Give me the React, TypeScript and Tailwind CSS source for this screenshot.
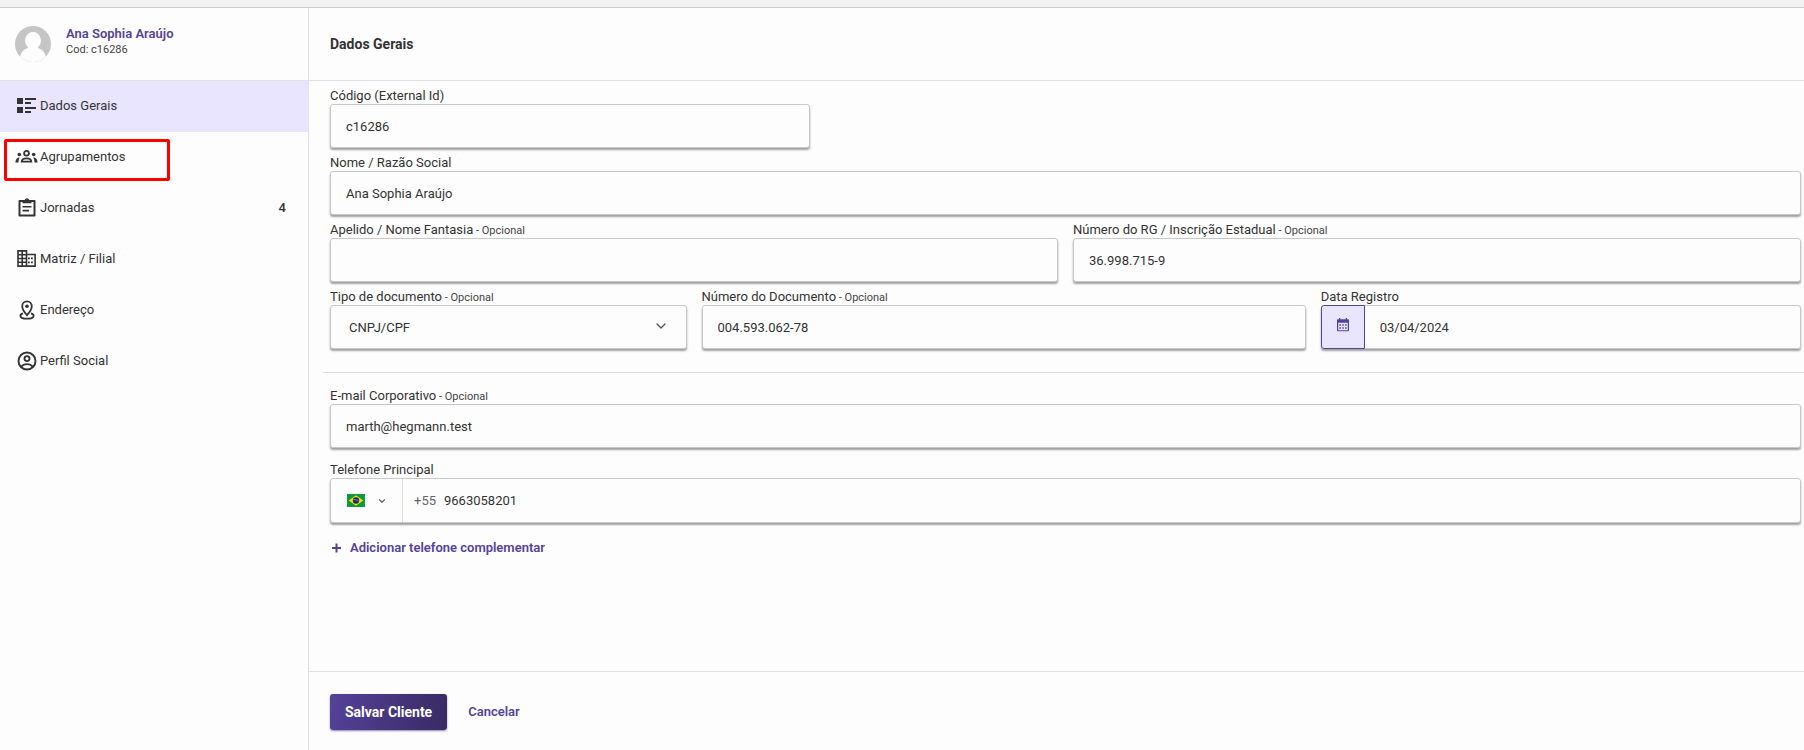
import { useState } from 'react'
import type { ReactNode } from 'react'
import { ChevronDown } from 'lucide-react'

interface NavItem {
  label: string
  icon: ReactNode
  count?: number
  highlighted?: boolean
}

interface FieldProps {
  id: string
  label: string
  optional?: boolean
  className?: string
  children: ReactNode
}

const controlClass =
  'block h-11 w-full rounded-[3px] border border-[#c8c8c8] bg-[#fdfdfd] px-[15px] text-[13px] text-[#333] shadow-[0_2px_2px_#a0a0a0] outline-none focus:border-[#54429a]'

function ListIcon() {
  return (
    <svg viewBox="0 0 19 15" className="h-[15px] w-[19px]" fill="currentColor" aria-hidden="true">
      <path d="M0 0h6v6H0zM0 9h6v6H0zM8 0h11v2H8zM8 4h6v2H8zM8 9h11v2H8zM8 13h6v2H8z" />
    </svg>
  )
}

function GroupIcon() {
  return (
    <svg viewBox="0 0 23 13" className="h-[13px] w-[23px]" fill="none" stroke="currentColor" aria-hidden="true">
      <circle cx="11.500" cy="3.300" r="2.400" strokeWidth="1.800" />
      <path d="M6.700 11.600c.2-2.100 2-3.200 4.800-3.200s4.600 1.100 4.800 3.200z" strokeWidth="1.800" />
      <g fill="currentColor" stroke="none">
        <circle cx="4.300" cy="4.500" r="1.800" />
        <circle cx="18.700" cy="4.500" r="1.800" />
        <path d="M4.800 7.600C2.200 7.500.6 9.200.4 12.500h3.100c0-2.200.4-3.600 1.300-4.900zM18.200 7.600c2.600-.1 4.200 1.600 4.400 4.900h-3.100c0-2.200-.4-3.600-1.300-4.900z" />
      </g>
    </svg>
  )
}

function ClipboardIcon() {
  return (
    <svg viewBox="0 0 18 19" className="h-[19px] w-[18px]" aria-hidden="true">
      <path fill="none" stroke="currentColor" strokeWidth="2" strokeLinejoin="round" d="M1.500 3h15v14.500h-15z" />
      <path fill="currentColor" fillRule="evenodd" d="M4.500 2h2.200a2.400 2.400 0 0 1 4.600 0h2.200v3.200h-9zM9 1.800a.8.8 0 1 0 0 1.600.8.800 0 0 0 0-1.600z" />
      <path fill="none" stroke="currentColor" strokeWidth="1.600" d="M4.500 8.800h9M4.500 12.600h6.500" />
    </svg>
  )
}

function BuildingIcon() {
  return (
    <svg viewBox="0 0 19 17" className="h-[17px] w-[19px]" fill="none" stroke="currentColor" strokeWidth="1.600" aria-hidden="true">
      <path d="M1 .9h8.500v15.200H1zM9.500 4.500h8.600v11.600H9.500M5.200 1v15M1 4.700h8.500M1 8.500h8.500M1 12.300h8.500" />
      <path fill="currentColor" stroke="none" d="M11 7.500h1.800v1.800H11zM14 7.500h1.800v1.800H14zM11 11.500h1.800v1.800H11zM14 11.500h1.800v1.800H14z" />
    </svg>
  )
}

function PinIcon() {
  return (
    <svg viewBox="0 0 20 20" className="h-5 w-5" fill="none" stroke="currentColor" strokeWidth="1.800" aria-hidden="true">
      <path d="M10 15.200C7 11.800 5.200 9 5.200 6.200a4.800 4.800 0 0 1 9.600 0c0 2.800-1.800 5.600-4.800 9z" />
      <circle cx="10" cy="6.200" r="1.800" fill="currentColor" stroke="none" />
      <path d="M6 13.400c-1.800.5-2.600 1.300-2.600 2.300 0 1.800 3 3 6.600 3s6.600-1.200 6.600-3c0-1-.8-1.800-2.600-2.300" />
    </svg>
  )
}

function ProfileIcon() {
  return (
    <svg viewBox="0 0 20 20" className="h-5 w-5" fill="none" stroke="currentColor" strokeWidth="1.900" aria-hidden="true">
      <circle cx="10" cy="10" r="8.500" />
      <circle cx="10" cy="7.600" r="2.500" />
      <path d="M4.200 15.800c1.300-1.800 3.300-2.700 5.800-2.700s4.500.9 5.800 2.700" />
    </svg>
  )
}

function CalendarIcon() {
  return (
    <svg viewBox="0 0 14 14" className="h-3.5 w-3.5" fill="#54429a" aria-hidden="true">
      <path
        fillRule="evenodd"
        d="M3 0h1.300v1.300h5.400V0H11v1.300h1c.6 0 1 .4 1 1v10c0 .6-.4 1-1 1H2c-.6 0-1-.4-1-1v-10c0-.6.400-1 1-1h1zM2.200 4.800v7.400h9.600V4.800z"
      />
      <path d="M3.300 6.300h1.600v1.500H3.300zM6.200 6.300h1.600v1.500H6.200zM9.100 6.300h1.600v1.500H9.100zM3.300 9.200h1.600v1.500H3.300zM6.200 9.200h1.600v1.500H6.200zM9.100 9.200h1.600v1.500H9.100z" />
    </svg>
  )
}

function BrazilFlag() {
  return (
    <svg viewBox="0 0 18 13" className="h-[13px] w-[18px]" aria-hidden="true">
      <path fill="#0b9b3a" d="M0 0h18v13H0z" />
      <path fill="#fedf00" d="M9 1.300 16.200 6.500 9 11.700 1.800 6.500z" />
      <circle cx="9" cy="6.500" r="3.200" fill="#1b2b78" />
      <path d="M6.200 5.600c2-.3 4.200.300 5.700 1.800" fill="none" stroke="#fff" strokeWidth=".4" />
    </svg>
  )
}

function Avatar() {
  return (
    <svg viewBox="0 0 36 36" className="h-9 w-9 shrink-0" role="img" aria-label="Avatar">
      <clipPath id="avatar-clip">
        <circle cx="18" cy="18" r="18" />
      </clipPath>
      <g clipPath="url(#avatar-clip)">
        <path fill="#c5c5c5" d="M0 0h36v36H0z" />
        <ellipse cx="18" cy="14.500" rx="8" ry="8.500" fill="#fdfdfd" />
        <path fill="#fdfdfd" d="M13 20h10v2c4 1 7 4 8 9v5H5v-5c1-5 4-8 8-9z" />
      </g>
    </svg>
  )
}

const navItems: NavItem[] = [
  { label: 'Dados Gerais', icon: <ListIcon /> },
  { label: 'Agrupamentos', icon: <GroupIcon />, highlighted: true },
  { label: 'Jornadas', icon: <ClipboardIcon />, count: 4 },
  { label: 'Matriz / Filial', icon: <BuildingIcon /> },
  { label: 'Endereço', icon: <PinIcon /> },
  { label: 'Perfil Social', icon: <ProfileIcon /> },
]

function Field({ id, label, optional, className, children }: FieldProps) {
  return (
    <div className={className}>
      <label htmlFor={id} className="block h-[18px] text-[13px] leading-5 text-[#333]">
        {label}
        {optional && <span className="text-[11px] text-[#444]"> - Opcional</span>}
      </label>
      {children}
    </div>
  )
}

function Sidebar() {
  const [active, setActive] = useState('Dados Gerais')

  return (
    <aside className="w-[309px] shrink-0 border-r border-[#dee2e6]">
      <div className="flex h-[73px] items-start gap-[15px] border-b border-[#dee2e6] px-[15px] pt-[18px]">
        <Avatar />
        <div>
          <p className="text-[13px] leading-4 font-semibold text-[#54429a]">Ana Sophia Araújo</p>
          <p className="text-[11px] leading-[15px] text-[#444]">Cod: c16286</p>
        </div>
      </div>
      <nav>
        {navItems.map((item) => (
          <a
            key={item.label}
            href="#"
            onClick={() => setActive(item.label)}
            className={`relative flex h-[51px] items-center pr-[22px] pb-0.5 pl-[15px] text-[13px] text-[#333] ${active === item.label ? 'bg-[#e9e5ff]' : ''}`}
          >
            <span className="mr-[2px] flex w-[23px] justify-center">{item.icon}</span>
            {item.label}
            {item.count && <span className="ml-auto font-medium">{item.count}</span>}
            {item.highlighted && (
              <span className="pointer-events-none absolute top-[7px] left-1 h-[42px] w-[166px] rounded-[2px] border-3 border-[#fe0000]" />
            )}
          </a>
        ))}
      </nav>
    </aside>
  )
}

function ClientForm() {
  return (
    <form className="flex min-w-0 flex-1 flex-col" onSubmit={(e) => e.preventDefault()}>
      <header className="flex h-[73px] items-center border-b border-[#dee2e6] px-[21px]">
        <h1 className="text-[14px] font-bold text-[#333]">Dados Gerais</h1>
      </header>

      <div className="flex-1">
        <div className="grid grid-cols-12 gap-x-[15px] gap-y-[5px] pt-[5px] pr-[3px] pl-[21px]">
          <Field id="codigo" label="Código (External Id)" className="col-span-4">
            <input id="codigo" className={controlClass} defaultValue="c16286" />
          </Field>
          <Field id="nome" label="Nome / Razão Social" className="col-span-12">
            <input id="nome" className={controlClass} defaultValue="Ana Sophia Araújo" />
          </Field>
          <Field id="apelido" label="Apelido / Nome Fantasia" optional className="col-span-6">
            <input id="apelido" className={controlClass} />
          </Field>
          <Field id="rg" label="Número do RG / Inscrição Estadual" optional className="col-span-6">
            <input id="rg" className={controlClass} defaultValue="36.998.715-9" />
          </Field>
          <Field id="tipo" label="Tipo de documento" optional className="col-span-3">
            <div className="relative">
              <select id="tipo" className={`${controlClass} appearance-none pt-0.5 pl-[18px]`} defaultValue="CNPJ/CPF">
                <option>CNPJ/CPF</option>
              </select>
              <ChevronDown size={16} className="pointer-events-none absolute top-[13px] right-[18px] text-[#555]" />
            </div>
          </Field>
          <Field id="documento" label="Número do Documento" optional className="col-span-5">
            <input id="documento" className={controlClass} defaultValue="004.593.062-78" />
          </Field>
          <Field id="data" label="Data Registro" className="col-span-4">
            <div className="flex rounded-[3px] shadow-[0_2px_2px_#a0a0a0]">
              <button
                type="button"
                aria-label="Abrir calendário"
                className="flex h-11 w-11 shrink-0 items-center justify-center rounded-l-[3px] border border-[#54429a] bg-[#e9e5ff] pb-1"
              >
                <CalendarIcon />
              </button>
              <input
                id="data"
                className="h-11 min-w-0 flex-1 rounded-r-[3px] border border-l-0 border-[#c8c8c8] bg-[#fdfdfd] px-[15px] text-[13px] text-[#333] outline-none"
                defaultValue="03/04/2024"
              />
            </div>
          </Field>
        </div>

        <hr className="mt-[23px] ml-[14px] border-[#dedede]" />

        <div className="flex flex-col gap-3 pt-[13px] pr-[3px] pl-[21px]">
          <Field id="email" label="E-mail Corporativo" optional>
            <input id="email" type="email" className={controlClass} defaultValue="marth@hegmann.test" />
          </Field>
          <Field id="telefone" label="Telefone Principal">
            <div className="flex h-[45px] rounded-[3px] border border-[#c8c8c8] bg-[#fdfdfd] shadow-[0_2px_2px_#a0a0a0]">
              <button
                type="button"
                aria-label="País: Brasil"
                className="flex w-[72px] shrink-0 items-center gap-3 border-r border-[#dedede] pl-4"
              >
                <BrazilFlag />
                <ChevronDown size={10} strokeWidth={3} className="text-[#666]" />
              </button>
              <span className="flex items-center pl-[11px] text-[13px] text-[#666]">+55</span>
              <input
                id="telefone"
                type="tel"
                className="min-w-0 flex-1 bg-transparent px-2 text-[13px] text-[#333] outline-none"
                defaultValue="9663058201"
              />
            </div>
          </Field>
          <button type="button" className="mt-1 flex items-center gap-2 self-start text-[13px] leading-[18px] font-semibold text-[#54429a]">
            <svg viewBox="0 0 12 12" className="h-3 w-3" stroke="currentColor" strokeWidth="2" aria-hidden="true">
              <path d="M6.500 1.500v9M2 6h9" />
            </svg>
            Adicionar telefone complementar
          </button>
        </div>
      </div>

      <footer className="flex h-[79px] items-start gap-[21px] border-t border-[#dee2e6] px-[21px] pt-[22px]">
        <button
          type="submit"
          className="h-9 rounded-[3px] bg-linear-[100deg,#54429a,#382b63] px-[15px] text-[14px] font-bold text-white shadow-[0_1px_2px_#8f86b3]"
        >
          Salvar Cliente
        </button>
        <button type="button" className="h-9 text-[13px] font-semibold text-[#54429a]">
          Cancelar
        </button>
      </footer>
    </form>
  )
}

export default function App() {
  return (
    <div className="flex min-h-screen flex-col bg-[#fdfdfd] font-[Roboto,sans-serif]">
      <div className="h-2 border-b border-[#ccc] bg-[#f2f2f2]" />
      <main className="flex flex-1">
        <Sidebar />
        <ClientForm />
      </main>
    </div>
  )
}
